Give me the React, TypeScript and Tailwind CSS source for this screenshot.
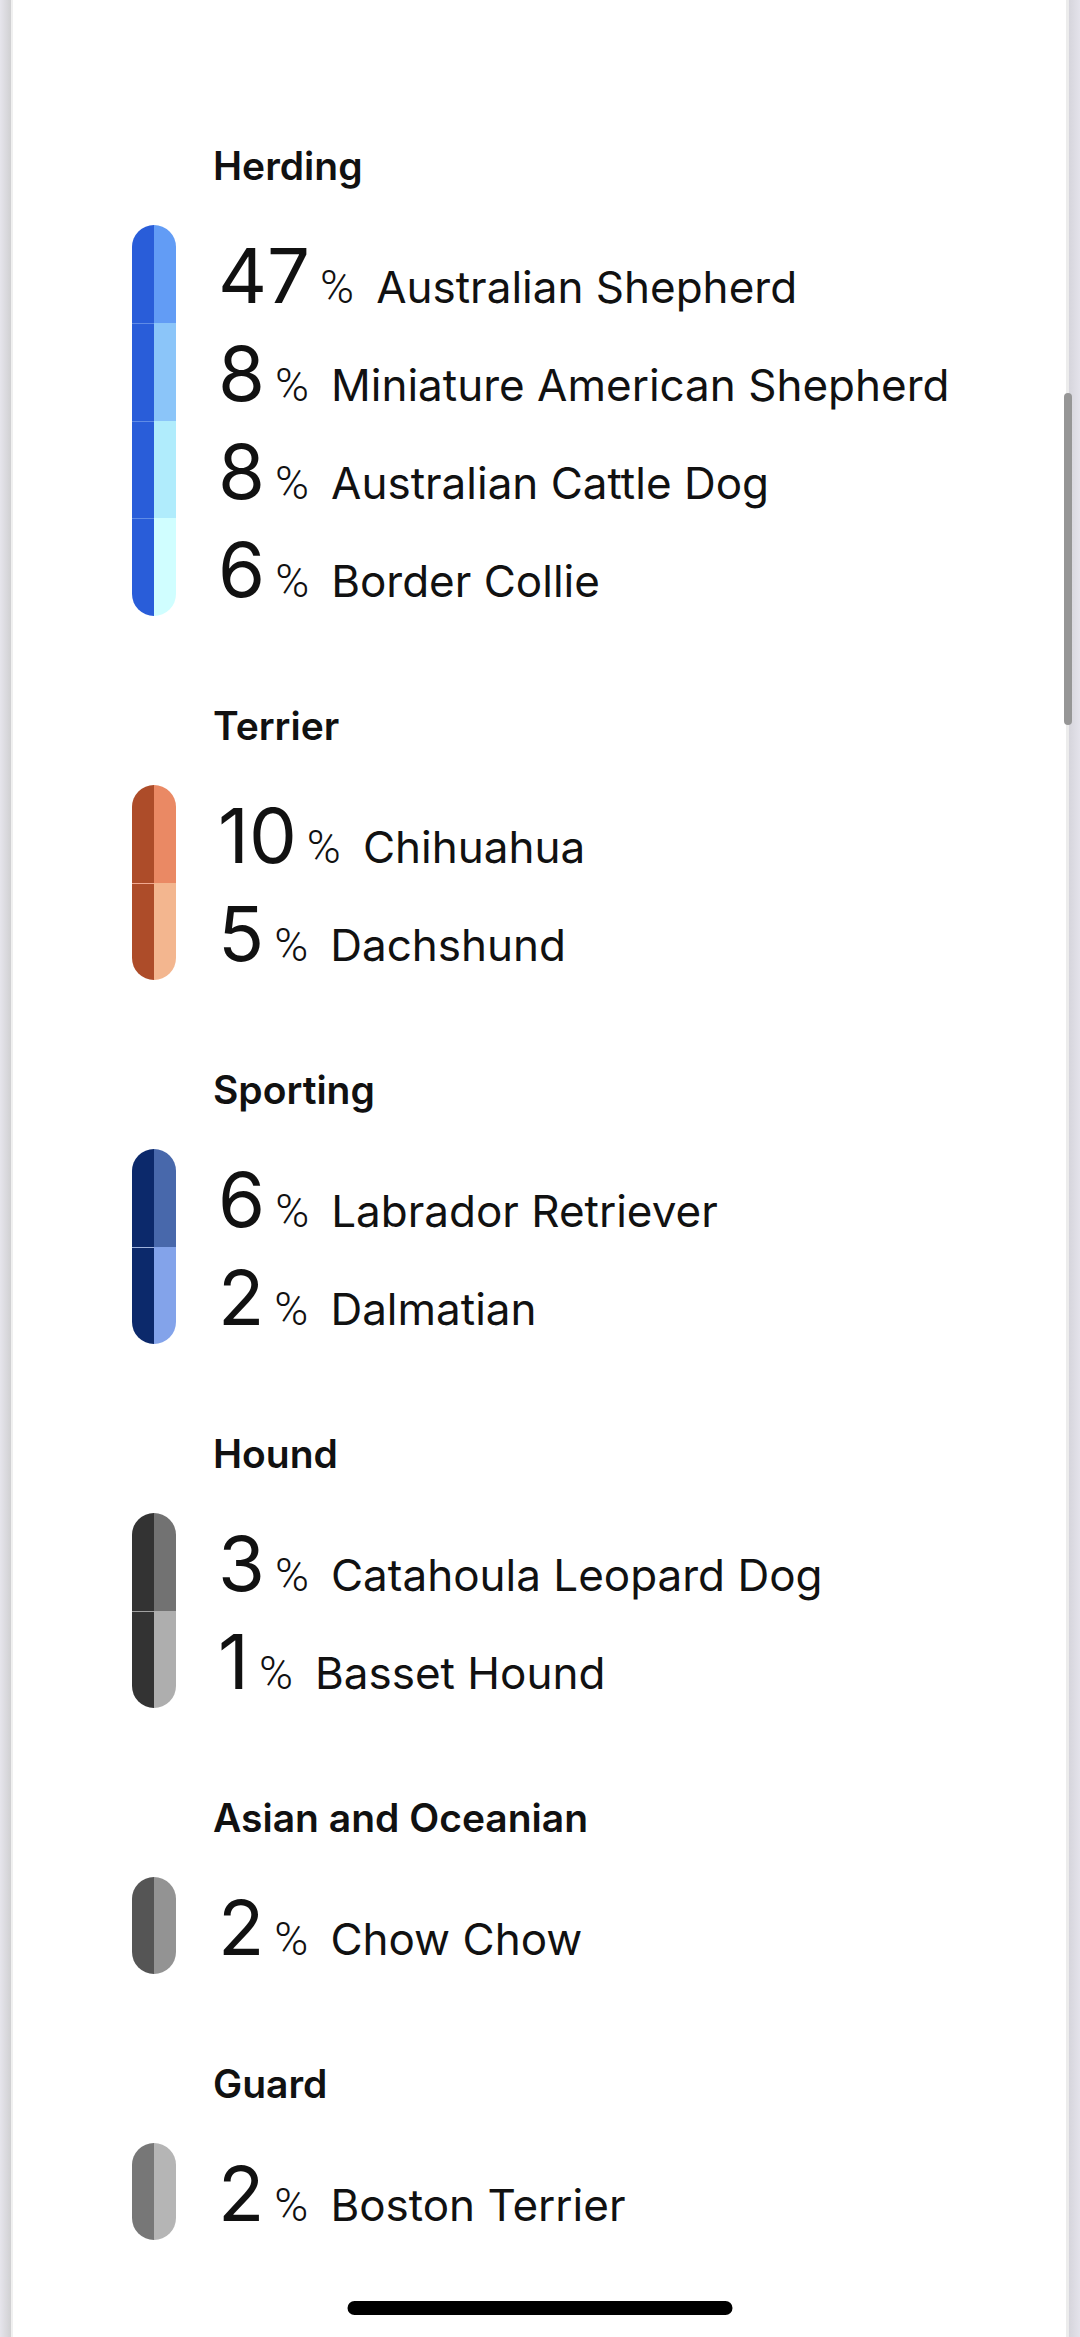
type Breed = { name: string; percent: number; shade: string };

type Group = { name: string; base: string; seam: string; breeds: Breed[] };

const groups: Group[] = [
  {
    name: "Herding",
    base: "bg-[#295dd9]",
    seam: "border-[#5f8be6]",
    breeds: [
      { name: "Australian Shepherd", percent: 47, shade: "bg-[#629cf5]" },
      { name: "Miniature American Shepherd", percent: 8, shade: "bg-[#8bc5f9]" },
      { name: "Australian Cattle Dog", percent: 8, shade: "bg-[#b0ecfc]" },
      { name: "Border Collie", percent: 6, shade: "bg-[#d0feff]" },
    ],
  },
  {
    name: "Terrier",
    base: "bg-[#ad4c29]",
    seam: "border-[#f0a890]",
    breeds: [
      { name: "Chihuahua", percent: 10, shade: "bg-[#ea8964]" },
      { name: "Dachshund", percent: 5, shade: "bg-[#f3b68f]" },
    ],
  },
  {
    name: "Sporting",
    base: "bg-[#0c296b]",
    seam: "border-[#9fb2dc]",
    breeds: [
      { name: "Labrador Retriever", percent: 6, shade: "bg-[#4868ab]" },
      { name: "Dalmatian", percent: 2, shade: "bg-[#83a3ea]" },
    ],
  },
  {
    name: "Hound",
    base: "bg-[#333333]",
    seam: "border-[#a0a0a0]",
    breeds: [
      { name: "Catahoula Leopard Dog", percent: 3, shade: "bg-[#727272]" },
      { name: "Basset Hound", percent: 1, shade: "bg-[#aeaeae]" },
    ],
  },
  {
    name: "Asian and Oceanian",
    base: "bg-[#555555]",
    seam: "border-[#939393]",
    breeds: [{ name: "Chow Chow", percent: 2, shade: "bg-[#939393]" }],
  },
  {
    name: "Guard",
    base: "bg-[#777777]",
    seam: "border-[#b5b5b5]",
    breeds: [{ name: "Boston Terrier", percent: 2, shade: "bg-[#b5b5b5]" }],
  },
];

function BreedBar({ group }: { group: Group }) {
  return (
    <div
      aria-hidden="true"
      className="flex w-11 shrink-0 flex-col overflow-hidden rounded-full"
    >
      {group.breeds.map((breed, index) => (
        <div key={breed.name} className="flex flex-1">
          <div className={`w-1/2 ${group.base} ${index > 0 ? "border-t" : ""} ${group.seam}`} />
          <div className={`w-1/2 ${breed.shade}`} />
        </div>
      ))}
    </div>
  );
}

function BreedGroup({ group }: { group: Group }) {
  return (
    <section>
      <h2 className="mb-[35px] pl-[81px] text-[39px] leading-[48px] font-semibold">
        {group.name}
      </h2>
      <div className="flex gap-[42px]">
        <BreedBar group={group} />
        <ul className="flex flex-col gap-px">
          {group.breeds.map((breed) => (
            <li key={breed.name} className="flex h-[97px] items-baseline whitespace-nowrap">
              <span className="text-[76px] leading-[100px]">{breed.percent}</span>
              <span className="ml-2.5 font-[Roboto,sans-serif] text-[46px] font-light">%</span>
              <span className="ml-[22px] text-[44px]">{breed.name}</span>
            </li>
          ))}
        </ul>
      </div>
    </section>
  );
}

export default function App() {
  return (
    <div className="flex min-h-screen bg-white font-[Inter,sans-serif] text-[#111111]">
      <div className="w-[11px] shrink-0 bg-linear-to-r from-[#e6e5ec] to-[#d0d0d2]" />
      <div className="w-0.5 shrink-0 bg-[#f0f0f0]" />
      <main className="flex min-w-0 flex-1 flex-col gap-[86px] pt-[142px] pb-24 pl-[119px]">
        {groups.map((group) => (
          <BreedGroup key={group.name} group={group} />
        ))}
      </main>
      <div className="w-[3px] shrink-0 bg-[#ececec]" />
      <div className="w-[11px] shrink-0 bg-linear-to-r from-[#d6d5dc] to-[#e4e3eb]" />
      <div className="fixed top-[393px] right-2 h-[332px] w-2 rounded-full bg-[#969696]" />
      <div className="fixed bottom-[22px] left-1/2 h-3.5 w-[385px] -translate-x-1/2 rounded-full bg-black" />
    </div>
  );
}
